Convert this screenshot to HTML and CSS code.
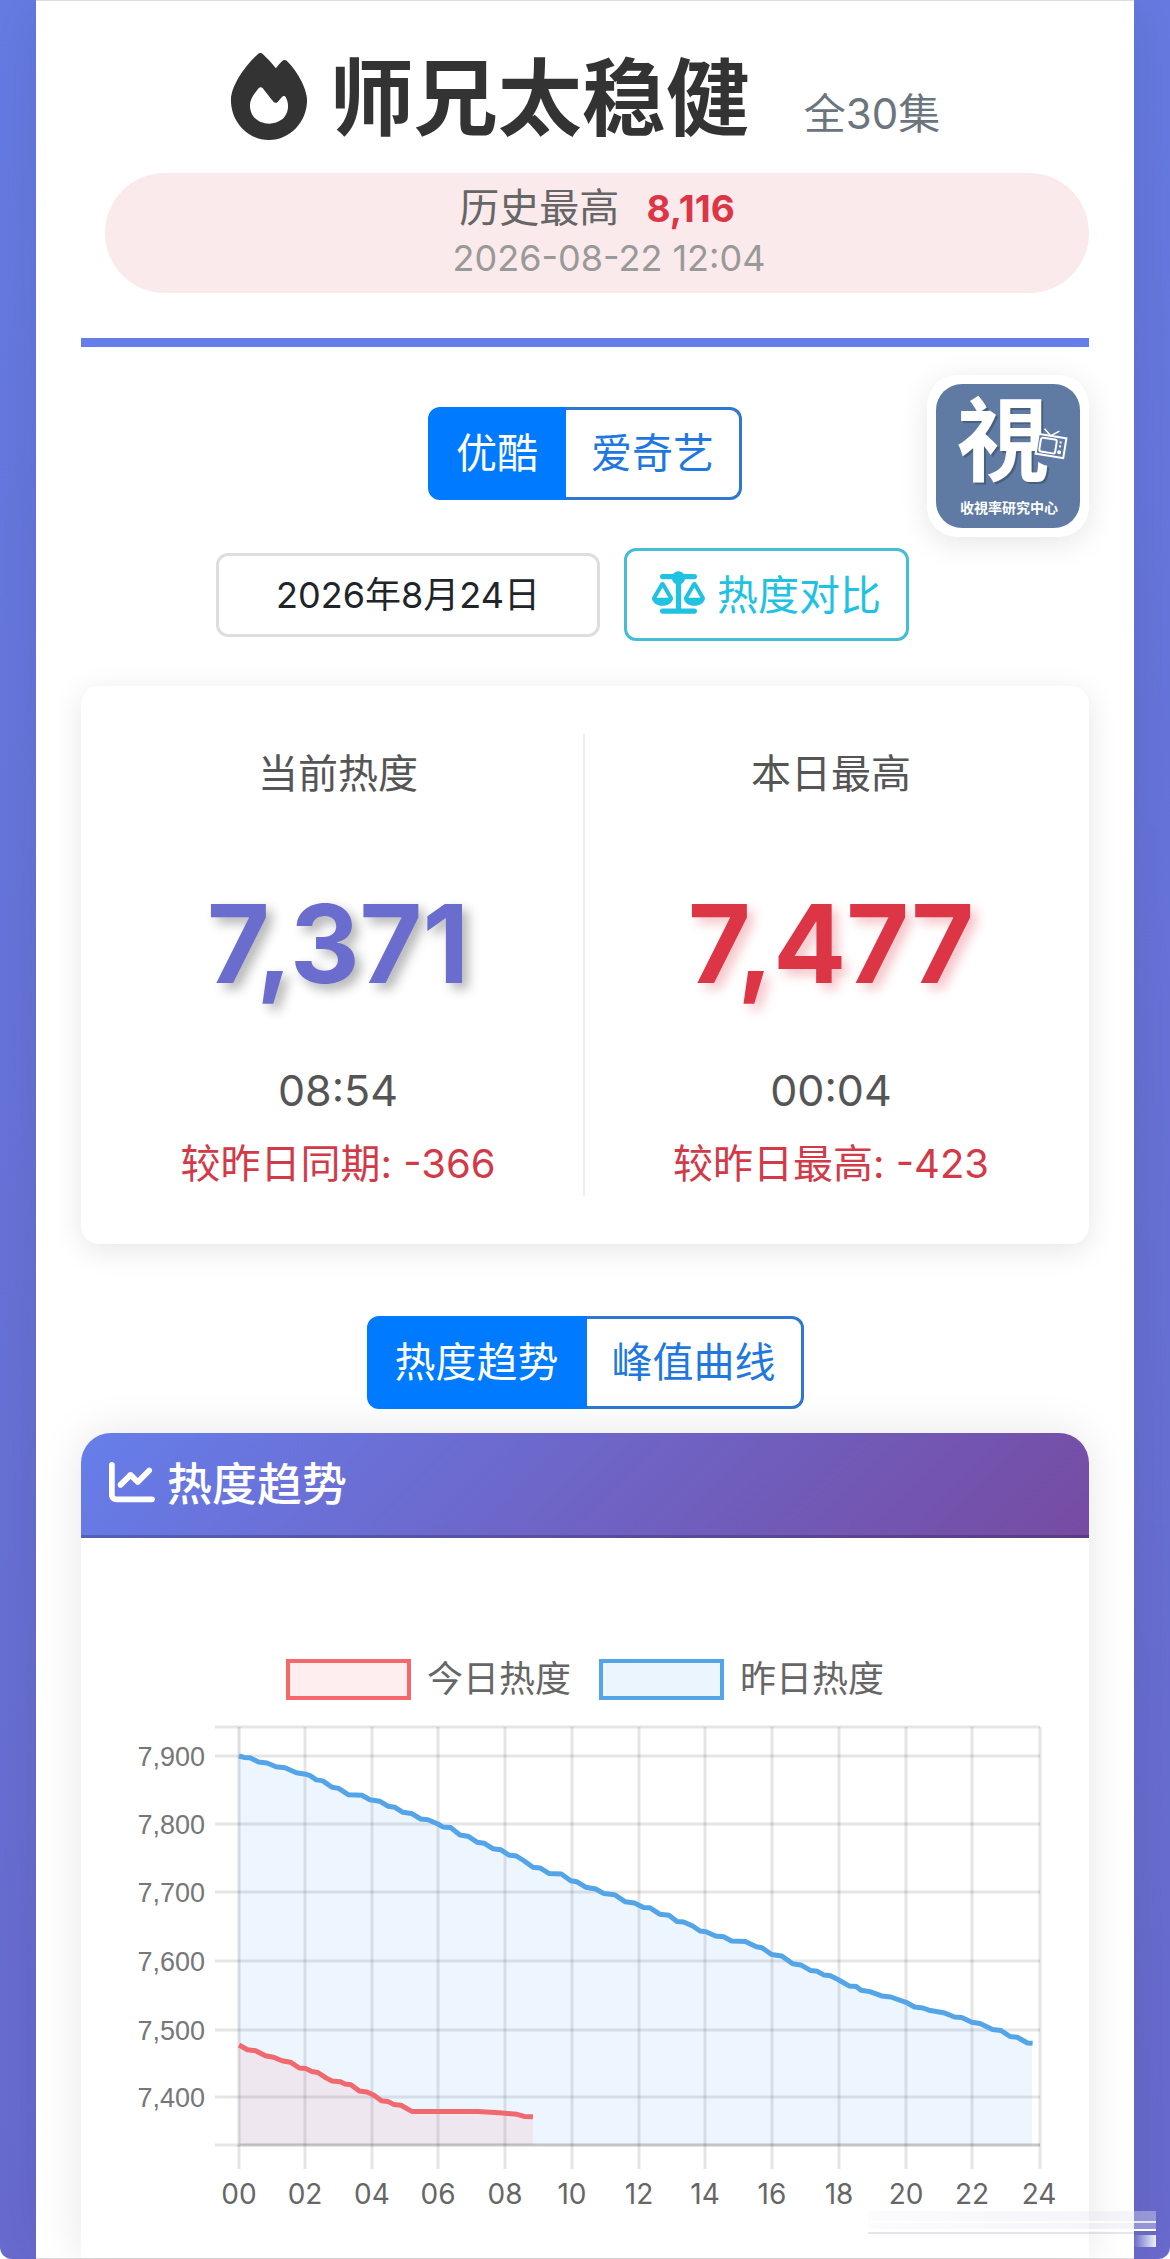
FILE: index.html
```html
<!DOCTYPE html>
<html lang="zh-CN">
<head>
  <meta charset="UTF-8" />
  <meta name="viewport" content="width=device-width, initial-scale=1.0"/>
  <title>师兄太稳健 - 热度趋势</title>
  <link rel="stylesheet" href="styles.css">
</head>
<body>
  <main class="container">
    <header class="header">
      <div class="title-row">
        <h1>
          <svg class="icon-fire" viewBox="0 0 448 512" aria-hidden="true"><path fill="currentColor" d="M159.3 5.4c7.8-7.3 19.9-7.2 27.7 .1c27.6 25.9 53.5 53.8 77.7 84c11-14.4 23.5-30.1 37-42.9c7.9-7.4 20.1-7.4 28 .1c34.6 33 63.9 76.6 84.5 118c20.3 40.8 33.8 82.5 33.8 111.9C448 404.2 348.2 512 224 512C98.4 512 0 404.1 0 276.5c0-38.4 17.8-85.3 45.4-131.7C73.3 97.7 112.7 48.6 159.3 5.4zM225.7 416c25.3 0 47.7-7 68.8-21c42.1-29.4 53.4-88.2 28.1-134.4c-4.5-9-16-9.6-22.5-2l-25.2 29.3c-6.6 7.6-18.5 7.4-24.7-.5c-16.5-21-46-58.5-62.8-79.8c-6.3-8-18.3-8.1-24.7-.1c-33.8 42.5-50.8 69.3-50.8 99.4C112 375.4 162.6 416 225.7 416z"/></svg><span>师兄太稳健</span>
        </h1>
        <span class="episodes">全30集</span>
      </div>
      <div class="history">
        <p class="history-peak">历史最高 <strong>8,116</strong></p>
        <p class="history-time">2026-08-22 12:04</p>
      </div>
    </header>

    <section class="controls">
      <div class="btn-group">
        <button type="button" class="btn active">优酷</button>
        <button type="button" class="btn">爱奇艺</button>
      </div>
      <div class="date-row">
        <input type="text" class="date-input" aria-label="日期" value="2026年8月24日" />
        <button type="button" class="btn btn-compare">
          <svg class="icon-scale" viewBox="0 0 640 512" aria-hidden="true"><path fill="currentColor" d="M384 32H512c17.7 0 32 14.3 32 32s-14.3 32-32 32H398.4c-5.2 25.8-22.9 47.1-46.4 57.3V448H512c17.7 0 32 14.3 32 32s-14.3 32-32 32H320 128c-17.7 0-32-14.3-32-32s14.3-32 32-32H288V153.3c-23.5-10.3-41.2-31.6-46.4-57.3H128c-17.7 0-32-14.3-32-32s14.3-32 32-32H256c14.6-19.4 37.8-32 64-32s49.4 12.6 64 32zm55.6 288H584.4L512 195.8 439.6 320zM512 416c-62.9 0-115.2-34-126-78.9c-2.6-11 1-22.3 6.7-32.1l95.2-163.2c5-8.6 14.2-13.8 24.1-13.8s19.1 5.3 24.1 13.8l95.2 163.2c5.7 9.8 9.3 21.1 6.7 32.1C627.2 382 574.9 416 512 416zM126.8 195.8L54.4 320H199.3L126.8 195.8zM.9 337.1c-2.6-11 1-22.3 6.7-32.1l95.2-163.2c5-8.6 14.2-13.8 24.1-13.8s19.1 5.3 24.1 13.8l95.2 163.2c5.7 9.8 9.3 21.1 6.7 32.1C242 382 189.7 416 126.8 416S11.7 382 .9 337.1z"/></svg>
          热度对比
        </button>
      </div>
      <div class="logo">
        <svg viewBox="0 0 144 144" role="img" aria-label="收视率研究中心">
          <rect width="144" height="144" rx="26" fill="#5f7ba4"/>
          <text class="logo-shadow" x="69" y="92">視</text>
          <text class="logo-char" x="67" y="90">視</text>
          <g transform="rotate(9 115 62)">
            <rect x="101" y="52" width="28" height="20" fill="#5f7ba4" stroke="#fff" stroke-width="2"/>
            <rect x="104" y="55" width="16" height="14" rx="2" fill="none" stroke="#fff" stroke-width="2"/>
            <path d="M113 52l-7-6M113 52l8-6" stroke="#fff" stroke-width="1.5"/>
            <path d="M124 56v2M124 60v2" stroke="#fff" stroke-width="2"/>
            <circle cx="124" cy="67" r="2" fill="#fff"/>
          </g>
          <text class="logo-name" x="73" y="129">收視率研究中心</text>
        </svg>
      </div>
    </section>

    <section class="stats">
      <div class="stat">
        <h2>当前热度</h2>
        <p class="stat-value">7,371</p>
        <p class="stat-time">08:54</p>
        <p class="stat-diff">较昨日同期: -366</p>
      </div>
      <div class="stat">
        <h2>本日最高</h2>
        <p class="stat-value peak">7,477</p>
        <p class="stat-time">00:04</p>
        <p class="stat-diff">较昨日最高: -423</p>
      </div>
    </section>

    <div class="btn-group">
      <button type="button" class="btn active">热度趋势</button>
      <button type="button" class="btn">峰值曲线</button>
    </div>

    <section class="chart-card">
      <h2 class="chart-header">
        <svg class="icon-chart" viewBox="0 0 512 512" aria-hidden="true"><path fill="currentColor" d="M64 64c0-17.7-14.3-32-32-32S0 46.3 0 64V400c0 44.2 35.8 80 80 80H480c17.7 0 32-14.3 32-32s-14.3-32-32-32H80c-8.8 0-16-7.2-16-16V64zm406.6 86.6c12.5-12.5 12.5-32.8 0-45.3s-32.8-12.5-45.3 0L320 210.7l-57.4-57.4c-12.5-12.5-32.8-12.5-45.3 0l-112 112c-12.5 12.5-12.5 32.8 0 45.3s32.8 12.5 45.3 0L240 221.3l57.4 57.4c12.5 12.5 32.8 12.5 45.3 0l128-128z"/></svg>
        热度趋势
      </h2>
      <div class="legend">
        <span class="legend-item"><i class="swatch today"></i>今日热度</span>
        <span class="legend-item"><i class="swatch yesterday"></i>昨日热度</span>
      </div>
      <svg class="chart" viewBox="0 0 1008 530" role="img" aria-label="热度趋势图">
        <!-- grid -->
        <path class="grid" d="M134 14H959M134 43H959M134 111H959M134 179H959M134 248H959M134 317H959M134 384H959M134 432H959"/>
        <path class="grid" d="M224 14V456M291 14V456M357 14V456M424 14V456M491 14V456M558 14V456M624 14V456M691 14V456M758 14V456M825 14V456M891 14V456M959 14V456M158 432V456"/>
        <path class="axis" d="M158 14V432H959"/>

        <!-- yesterday -->
        <polygon class="fill-yesterday" points="158,432 158,43 204,55 225,61 257.6,75 268,82 281,82 314,94 357,111 387,123 435,143 459,155 504,174 562,194 602,209 642,224 664,228 700,243 757,266 788,279 825,289 862,300 899,310 936,324 951,330 951,432"/>
        <polyline class="line-yesterday" points="158,43 163,44.4 169,44.8 177.6,49 186,50 195,53.7 204,54.7 215.4,59.7 224.7,61.2 229,62.6 235.4,66.9 241.9,67.9 251,74.3 257.6,75.4 267.6,81.8 280.8,82.2 289,86.8 298.6,88.2 306.9,93.2 314,94.3 321.9,99.3 330.4,100.4 339.7,106 346.9,106.8 356.9,111 361.9,113.9 369.7,114.6 379,122 386.9,123.2 396,129.2 403.3,130.3 411.9,135.7 419.7,136.7 427.6,142 435.4,143 443.3,148 451.9,154.2 459,154.9 468.3,160.6 480.4,161 489.7,167.7 496,168.8 504.7,174.2 514.7,176 523,180.6 533.5,181.7 544.4,188.8 553.5,189.9 562.6,194.5 569,194.8 579,201.3 588,202.3 596,208.4 602.6,209 611.7,213 619,218 625,218.7 634.6,223 642.6,223.7 650.6,228 664.4,228.4 675.3,233.7 681,234.8 690.6,241.5 700.8,243 711.7,250.8 719.7,251.9 729.9,257.6 736.4,258.3 742.6,261.9 748.8,262.6 757,266.5 768,272.9 775.3,273.6 780,277.2 788.8,278.6 800.7,282.9 809.8,284 825,289.3 833.5,294 841.8,295 848,297.2 862.6,299.7 873.5,304 880.7,304.6 890.9,309.3 899,310.4 911.6,316.4 920,317.5 929,323.5 936.3,324.3 946.5,330 951.6,330.3"/>

        <!-- today -->
        <polygon class="fill-today" points="158,432 158,332 201,348 225,356 251,368 270,372 300,388 320,392 331,398 397,398 436,401 452,404 452,432"/>
        <polyline class="line-today" points="158,332 166.5,336.7 174.7,337.8 184.4,342.8 192.6,344.2 201,347.8 209.4,349.2 218.3,355 224.7,355.6 230.8,358.5 236.9,359.5 245,364.9 251,368 259.4,368.8 264,371 270,371.7 278.3,378 286,379 292.6,382 300.4,387.7 306.9,388.4 313,391.6 320,392.3 330.8,398.4 396.9,398.4 418.3,399.8 436,401.3 443.3,403.4 451.9,403.8"/>

        <g class="y-labels">
          <text x="124" y="53">7,900</text>
          <text x="124" y="121">7,800</text>
          <text x="124" y="189">7,700</text>
          <text x="124" y="258">7,600</text>
          <text x="124" y="327">7,500</text>
          <text x="124" y="394">7,400</text>
        </g>
        <g class="x-labels">
          <text x="158" y="491">00</text>
          <text x="224" y="491">02</text>
          <text x="291" y="491">04</text>
          <text x="357" y="491">06</text>
          <text x="424" y="491">08</text>
          <text x="491" y="491">10</text>
          <text x="558" y="491">12</text>
          <text x="624" y="491">14</text>
          <text x="691" y="491">16</text>
          <text x="758" y="491">18</text>
          <text x="825" y="491">20</text>
          <text x="891" y="491">22</text>
          <text x="958" y="491">24</text>
        </g>
      </svg>
    </section>
  </main>
  <div class="watermark"></div>
</body>
</html>
```

FILE: styles.css
```css
* {
  box-sizing: border-box;
}

html {
  background: #fff;
}

body {
  position: relative;
  margin: 0;
  padding: 0 36px;
  min-height: 100vh;
  font-family: Inter, "Noto Sans CJK SC", sans-serif;
  color: #333;
  background: linear-gradient(170deg, #667ce4 0%, #696acd 100%);
  border-radius: 0 0 12px 12px;
  overflow: hidden;
}

h1, h2, p {
  margin: 0;
}

.container {
  display: flex;
  flex-direction: column;
  min-height: 100vh;
  padding: 48px 45px 0;
  background: #fff;
  border-top: 1px solid #ddd;
  border-bottom: 1px solid #ddd;
  box-shadow: 0 0 60px rgba(0, 0, 0, 0.1);
}

/* header */
.header {
  padding-bottom: 45px;
  border-bottom: 9px solid #667eea;
}

.title-row {
  display: flex;
  justify-content: center;
  align-items: baseline;
  gap: 54px;
}

h1 {
  display: flex;
  align-items: baseline;
  gap: 22px;
  font-size: 84px;
  line-height: 100px;
  font-weight: 700;
}

.icon-fire {
  align-self: center;
  width: 78px;
  height: 87px;
  margin-bottom: 6px;
}

.episodes {
  font-size: 42px;
  line-height: 60px;
  color: #6c757d;
}

.history {
  margin: 24px 0 0 24px;
  padding: 9px 0;
  border-radius: 60px;
  background: #faeaeb;
  text-align: center;
  line-height: 51px;
}

.history-peak {
  height: 51px;
  font-size: 40px;
  color: #666;
}

.history-peak strong {
  margin-left: 16px;
  font-size: 37px;
  color: #dc3545;
}

.history-time {
  height: 51px;
  padding-left: 24px;
  font-size: 36px;
  color: #999;
}

/* controls */
.controls {
  position: relative;
  padding: 60px 0 45px;
}

.btn-group {
  display: flex;
  justify-content: center;
}

.btn {
  height: 93px;
  padding: 0 25px 7px;
  border: 3px solid #2f78d0;
  background: #fff;
  color: #1f78e0;
  font-family: inherit;
  font-size: 41px;
  cursor: pointer;
}

.btn-group .btn:first-child {
  border-radius: 12px 0 0 12px;
}

.btn-group .btn:last-child {
  border-left: none;
  border-radius: 0 12px 12px 0;
}

.btn.active {
  background: #007bff;
  border-color: #007bff;
  color: #fff;
}

.date-row {
  display: flex;
  justify-content: center;
  align-items: center;
  gap: 24px;
  margin-top: 48px;
  padding-right: 45px;
}

.date-input {
  width: 384px;
  height: 84px;
  padding: 0 0 6px;
  border: 3px solid #dedede;
  border-radius: 12px;
  background: #fff;
  color: #212529;
  font-family: inherit;
  font-size: 36px;
  text-align: center;
}

.btn-compare {
  display: flex;
  align-items: center;
  gap: 12px;
  padding: 0 25px 5px;
  border-color: #45bdd2;
  border-radius: 12px;
  color: #20c2e2;
}

.icon-scale {
  width: 53px;
  height: 43px;
}

.logo {
  position: absolute;
  top: 28px;
  right: 0;
  width: 162px;
  height: 162px;
  padding: 9px;
  border-radius: 30px;
  background: #fff;
  box-shadow: 0 6px 30px rgba(0, 0, 0, 0.1);
}

.logo text {
  fill: #fff;
  text-anchor: middle;
  font-weight: 700;
}

.logo .logo-char {
  font-size: 92px;
}

.logo .logo-shadow {
  font-size: 92px;
  fill: #48607f;
}

.logo .logo-name {
  font-size: 14px;
}

/* stats */
.stats {
  display: grid;
  grid-template-columns: 1fr 1fr;
  padding: 48px 12px;
  margin-bottom: 72px;
  border-radius: 18px;
  box-shadow: 0 6px 30px rgba(0, 0, 0, 0.1);
  text-align: center;
}

.stat {
  height: 462px;
  padding-top: 10px;
}

.stat:first-child {
  border-right: 2px solid #eee;
}

.stat h2 {
  font-size: 40px;
  line-height: 60px;
  font-weight: 400;
  color: #555;
}

.stat-value {
  margin-top: 64px;
  font-size: 108px;
  line-height: 152px;
  font-weight: 700;
  color: #6a6dce;
  text-shadow: 6px 6px 12px rgba(0, 0, 0, 0.3);
}

.stat-value.peak {
  color: #dc3545;
  text-shadow: 6px 6px 12px rgba(220, 53, 69, 0.3);
}

.stat-time {
  margin-top: 40px;
  font-size: 43px;
  line-height: 60px;
  color: #555;
}

.stat-diff {
  margin-top: 14px;
  font-size: 40px;
  line-height: 60px;
  color: #d23a48;
}

/* chart */
.chart-card {
  flex: 1;
  margin-top: 24px;
  border-radius: 30px 30px 0 0;
  box-shadow: 0 0 45px rgba(0, 0, 0, 0.1);
}

.chart-header {
  display: flex;
  align-items: center;
  gap: 12px;
  height: 105px;
  padding: 0 28px 5px;
  border-bottom: 3px solid rgba(0, 0, 0, 0.2);
  border-radius: 30px 30px 0 0;
  background: linear-gradient(135deg, #667eea 0%, #764ba2 100%);
  background-origin: border-box;
  color: #fff;
  font-size: 45px;
  font-weight: 500;
}

.icon-chart {
  width: 46px;
  height: 46px;
}

.legend {
  display: flex;
  justify-content: center;
  gap: 28px;
  padding-top: 114px;
}

.legend-item {
  display: flex;
  align-items: center;
  gap: 16px;
  font-size: 36px;
  line-height: 54px;
  color: #666;
}

.swatch {
  width: 125px;
  height: 41px;
  border: 4px solid #f5696d;
  background: #ffeeef;
}

.swatch.yesterday {
  border-color: #54a5e8;
  background: #ebf5fe;
}

.chart {
  display: block;
  width: 100%;
  margin-top: 7px;
}

.grid {
  stroke: rgba(0, 0, 0, 0.1);
  stroke-width: 3;
}

.axis {
  fill: none;
  stroke: rgba(0, 0, 0, 0.13);
  stroke-width: 3;
}

.line-yesterday,
.line-today {
  fill: none;
  stroke: #54a5e8;
  stroke-width: 5;
  stroke-linejoin: round;
}

.line-today {
  stroke: #f0696f;
}

.fill-yesterday {
  fill: rgba(54, 150, 245, 0.09);
}

.fill-today {
  fill: rgba(255, 99, 110, 0.1);
}

.y-labels {
  font-family: "Liberation Sans", Arial, sans-serif;
  font-size: 27px;
  fill: #777;
  text-anchor: end;
}

.x-labels {
  font-size: 28px;
  fill: #666;
  text-anchor: middle;
}

/* faded strip in the bottom corner */
.watermark {
  position: absolute;
  right: 14px;
  bottom: 12px;
  width: 288px;
  height: 36px;
  background:
    linear-gradient(rgba(255, 255, 255, 0.8), rgba(255, 255, 255, 0.8)) 0 10px / 100% 2px no-repeat,
    linear-gradient(#fff, #fff) 0 18px / 100% 2px no-repeat,
    linear-gradient(rgba(120, 120, 140, 0.18), rgba(120, 120, 140, 0.18)) 0 21px / 100% 2px no-repeat,
    linear-gradient(90deg, rgba(255, 255, 255, 0) 92%, rgba(255, 255, 255, 0.9)) 0 24px / 100% 12px no-repeat,
    linear-gradient(90deg, rgba(225, 225, 240, 0.1), rgba(225, 225, 240, 0.4)) 0 0 / 100% 20px no-repeat;
}
```
